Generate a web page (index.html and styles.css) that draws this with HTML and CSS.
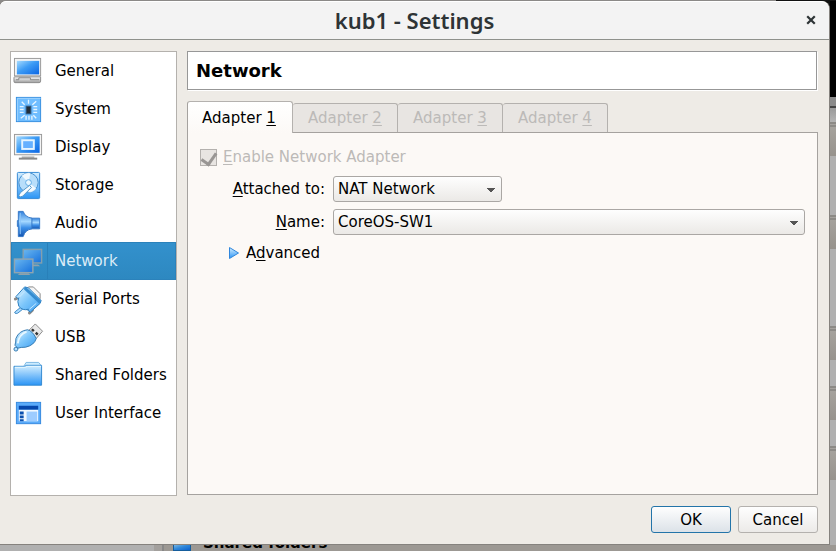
FILE: index.html
```html
<!DOCTYPE html>
<html lang="en">
<head>
<meta charset="utf-8">
<title>kub1 - Settings</title>
<link rel="stylesheet" href="styles.css">
</head>
<body>
<svg class="defs" width="0" height="0" aria-hidden="true">
  <defs>
    <linearGradient id="screen" x1="0" y1="0" x2="1" y2="1"><stop offset="0" stop-color="#a5dbff"/><stop offset=".45" stop-color="#3d9cf5"/><stop offset="1" stop-color="#0b66e4"/></linearGradient>
    <linearGradient id="dim" x1="0" y1="0" x2="1" y2="1"><stop offset="0" stop-color="#6bb8f0"/><stop offset="1" stop-color="#1670dc"/></linearGradient>
    <linearGradient id="sky" x1="0" y1="0" x2="0" y2="1"><stop offset="0" stop-color="#d5efff"/><stop offset="1" stop-color="#2a94f5"/></linearGradient>
    <linearGradient id="plug" x1="0" y1="0" x2="1" y2="1"><stop offset="0" stop-color="#e0f4ff"/><stop offset=".5" stop-color="#7cc6fb"/><stop offset="1" stop-color="#3c9df0"/></linearGradient>
    <linearGradient id="metal" x1="0" y1="0" x2="0" y2="1"><stop offset="0" stop-color="#ffffff"/><stop offset="1" stop-color="#9a9a9a"/></linearGradient>
    <linearGradient id="cone" x1="0" y1="0" x2="0" y2="1"><stop offset="0" stop-color="#2f7fdc"/><stop offset=".4" stop-color="#a5d8ff"/><stop offset=".65" stop-color="#3c8fe8"/><stop offset="1" stop-color="#1555b0"/></linearGradient>
  </defs>
</svg>
<div class="desktop">
  <main class="window">
    <header class="titlebar">
      <h1>kub1 - Settings</h1>
      <button class="close" type="button" aria-label="Close"><svg width="10" height="10" viewBox="0 0 10 10"><path d="M2 2l6 6M8 2L2 8" stroke="#2e3436" stroke-width="2.2" stroke-linecap="square"/></svg></button>
    </header>
    <div class="content">
      <nav class="sidebar">
        <a href="#general"><svg viewBox="0 0 32 32"><rect x="1.500" y="2.500" width="27" height="18" fill="#f4f4f4" stroke="#999"/><rect x="4" y="5" width="23" height="14" fill="url(#screen)"/><path d="M1.500 21.500h27v4.500q0 1.500-1.500 1.500H2q-1 0-1-1.500v-3.500z" fill="url(#metal)" stroke="#8a8a8a"/><path d="M3 24.500h3v-2h12v2h9" fill="none" stroke="#888"/></svg>General</a>
        <a href="#system"><svg viewBox="0 0 32 32"><rect x="3.500" y="3.500" width="25" height="25" fill="#6fbdff" stroke="#368fe0"/><path d="M4.500 28V4.500h24" fill="none" stroke="#9ed5ff"/><rect x="13.500" y="12.500" width="5" height="8" fill="#222d38" stroke="#335f8a"/><path d="M7 13h4M7 16h4M7 19h4M21 13h4M21 16h4M21 19h4M13.500 22.500v4M16.500 22.500v4M19.500 22.500v4M16 6v4M9 8l3 3M24 7.500l-4 3.500M12 22l-4 3M21 22l3 3" stroke="#e6f5ff" stroke-width="1.400"/></svg>System</a>
        <a href="#display"><svg viewBox="0 0 32 32"><path d="M9 24h13v3H9z" fill="url(#metal)"/><path d="M6 27.500h19" stroke="#888" stroke-width="2"/><rect x="1.500" y="2.500" width="28" height="21" fill="#f4f4f4" stroke="#999"/><rect x="3.500" y="4.500" width="24" height="17" fill="url(#screen)"/><rect x="9.500" y="8.500" width="12" height="9" fill="#65b0ff" stroke="#e5f4ff" stroke-width="2"/></svg>Display</a>
        <a href="#storage"><svg viewBox="0 0 32 32"><rect x="4.500" y="2.500" width="23" height="27" rx="1" fill="url(#sky)" stroke="#3589d5"/><circle cx="16" cy="13" r="10" fill="#b8defa" stroke="#458fce"/><path d="M16 13L9 6a10 10 0 0 1 9-3zM16 13l8 6a10 10 0 0 1-8 4z" fill="#fff" opacity=".8"/><circle cx="16" cy="13" r="3" fill="#e9f7ff" stroke="#5faae4"/><path d="M17 16l2 2-9 9-3 1-1-2 2-3z" fill="#f8fcff" stroke="#5095c9"/></svg>Storage</a>
        <a href="#audio"><svg viewBox="0 0 32 32"><path d="M6 13H4.500v6H6M18 10.500h9.500v11H18z" fill="url(#cone)" stroke="#397dca"/><path d="M5.500 3.500h5q2 6 9 7v11q-7 1-9 8h-5z" fill="url(#cone)" stroke="#3477c6"/><path d="M7.500 5v22" fill="none" stroke="#8dc6fa"/></svg>Audio</a>
        <a class="selected" href="#network" aria-current="page"><svg viewBox="0 0 32 32"><path d="M20 19h6l2 2h-8z" fill="#8ea1ad"/><rect x="10.500" y="3.500" width="19" height="14" fill="url(#dim)" stroke="#839fae" stroke-width="1.500"/><path d="M7 28h9l2 2H5z" fill="#8ea1ad"/><rect x="1.500" y="13.500" width="19" height="14" fill="url(#dim)" stroke="#8fa5b1" stroke-width="1.500"/></svg><span>Network</span></a>
        <a href="#serial"><svg viewBox="0 0 32 32"><path d="M14 5l2-2h5l7 7v5l-2 2z" fill="#f4f4f4" stroke="#8a8a8a"/><path d="M8 24l-5 4q-2 1-1 2t3 0l5-4" fill="#acdcff" stroke="#3c87c3"/><path d="M2.500 15.500l4-2M17 30l3-3" stroke="#8a8a8a" stroke-width="3" stroke-linecap="round"/><path d="M3 13l9-10 4 1 13 13-1 3-10 9-3-2 1-1q-6 2-10-3-2-5 0-9l-1 1z" fill="url(#plug)" stroke="#2b7dbd"/><path d="M12 4l16 15" stroke="#358cd0" stroke-width="3"/><path d="M6 14l6-6M17 26l7-6" stroke="#c6e9ff"/></svg>Serial Ports</a>
        <a href="#usb"><svg viewBox="0 0 32 32"><path d="M16 9l7-7 7.500 7.500L24 17z" fill="#e8e8e8" stroke="#898989"/><path d="M19.500 7.500l2 2M23.500 11l2 2" stroke="#333" stroke-width="2.500"/><path d="M15 8q5 1 9 9-2 7-11 9-5 0-8 1l-3-3q1-3 1-7 3-8 12-9z" fill="url(#plug)" stroke="#3479af"/><circle cx="3" cy="28" r="2" fill="#b9e3ff" stroke="#3479af"/><path d="M5 22q1-9 9-12" fill="none" stroke="#e6f7ff" stroke-width="2"/></svg>USB</a>
        <a href="#folders"><svg viewBox="0 0 32 32"><path d="M11.500 8V6l2-3.500h13l2 2.500v4z" fill="#ccecff" stroke="#7db9e3"/><path d="M1 6.500h11l2-1h15.500v20.500H1z" fill="url(#sky)" stroke="#3389d1"/><path d="M2 7.500h11l2-1h14" fill="none" stroke="#e8f9ff"/></svg>Shared Folders</a>
        <a href="#interface"><svg viewBox="0 0 32 32"><rect x="3.500" y="4.500" width="25" height="22" fill="#5aabfa" stroke="#3589df"/><path d="M6 12h20v12H6z" fill="#f3f9ff"/><path d="M6 8h20v4H6z" fill="#0648ac"/><path d="M14 14h11v10H14z" fill="#9dccff"/><path d="M7 14h4v3H7zM7 18h4v3H7zM7 22h4v2H7z" fill="#0b50af"/></svg>User Interface</a>
      </nav>
      <section class="page">
        <h2>Network</h2>
        <div class="tabs" role="tablist">
          <button class="active" type="button" role="tab" aria-selected="true">Adapter <u>1</u></button>
          <button type="button" role="tab" disabled>Adapter <u>2</u></button>
          <button type="button" role="tab" disabled>Adapter <u>3</u></button>
          <button type="button" role="tab" disabled>Adapter <u>4</u></button>
        </div>
        <form class="panel" role="tabpanel">
          <div class="enable"><input type="checkbox" id="enable" checked disabled><label for="enable"><u>E</u>nable Network Adapter</label></div>
          <div class="fields">
            <label for="attached"><u>A</u>ttached to:</label>
            <select id="attached" class="short"><option>NAT Network</option></select>
            <label for="name"><u>N</u>ame:</label>
            <select id="name"><option>CoreOS-SW1</option></select>
          </div>
          <button class="advanced" type="button"><svg width="10" height="12" viewBox="0 0 10 12"><path d="M.5.5v11L9.500 6z" fill="url(#sky)" stroke="#2f86dc"/></svg><span>A<u>d</u>vanced</span></button>
        </form>
      </section>
    </div>
    <footer class="actions">
      <button class="default" type="button">OK</button>
      <button type="button">Cancel</button>
    </footer>
  </main>
  <div class="behind-right" aria-hidden="true">
    <div class="terminal"></div>
    <div class="toolbar"></div>
    <div class="heading"></div>
    <div class="heading after-system"></div>
    <div class="heading after-storage"></div>
    <div class="heading after-audio"></div>
    <div class="heading after-network"></div>
  </div>
  <div class="behind-bottom" aria-hidden="true"><svg width="18" height="6"><path d="M0 0h18v6H0z" fill="#155d9c"/><path d="M1 0h16v5H1z" fill="url(#screen)" opacity=".7"/></svg><strong>Shared folders</strong></div>
</div>
</body>
</html>
```
FILE: styles.css
```css
* { box-sizing: border-box; }

body {
  margin: 0;
  font: 15px/20px "DejaVu Sans", sans-serif;
  color: #000;
}

button, select { font: inherit; color: inherit; }
.defs { display: block; }

u {
  text-decoration: underline;
  text-underline-offset: 2px;
  text-decoration-thickness: 1px;
  text-decoration-skip-ink: none;
}

/* Desktop: the dialog, with slivers of the windows behind it */
.desktop {
  display: grid;
  grid-template-columns: 1fr 6px;
  grid-template-rows: 1fr 6px;
  height: 100vh;
  padding-top: 1px;
  background: linear-gradient(to left, #111 60px, #8b8987 60px);
}

.window {
  display: flex;
  flex-direction: column;
  min-width: 0;
  background: #eeebe6;
  border-right: 1px solid #85827e;
  border-bottom: 1px solid #85827e;
  border-radius: 6px 8px 0 0;
}

.titlebar {
  display: grid;
  grid-template-columns: 36px 1fr 36px;
  align-items: center;
  height: 39px;
  padding-bottom: 2px;
  background: #f3f3f3;
  border-top: 1px solid #fff;
  border-bottom: 1px solid #8f918c;
  border-radius: 6px 8px 0 0;
}

.titlebar h1 {
  grid-column: 2;
  margin: 0;
  text-align: center;
  font: 600 22px/30px "Noto Sans", sans-serif;
  color: #2e3436;
}

.close { padding: 0; border: 0; background: none; line-height: 0; }

.content {
  display: flex;
  flex: 1;
  gap: 10px;
  min-height: 0;
  padding: 11px 11px 0 10px;
}

/* Sidebar */
.sidebar { width: 167px; flex: none; background: #fff; border: 1px solid #b4b1ad; }

.sidebar a {
  display: flex;
  align-items: center;
  gap: 11px;
  height: 38px;
  padding-left: 2px;
  color: #000;
  text-decoration: none;
  white-space: nowrap;
}

.sidebar svg { width: 31px; height: 31px; flex: none; }

.sidebar .selected {
  color: #dcecf7;
  background:
    linear-gradient(90deg, transparent 36px, #2980b9 36px, #2980b9 37px, transparent 37px),
    linear-gradient(#3391cd, #2d88c0);
  box-shadow: inset 0 0 0 1px #2b82bb;
}

/* Settings page */
.page { display: flex; flex: 1; flex-direction: column; min-width: 0; padding-bottom: 1px; }

.page h2 {
  height: 39px;
  margin: 0 1px 11px 0;
  padding: 9px 8px;
  font-size: 18px;
  line-height: 20px;
  background: #fff;
  border: 1px solid #979797;
  box-shadow: 1px 1px #fff;
}

.tabs { display: flex; align-items: flex-end; height: 32px; margin-bottom: -1px; }

.tabs button {
  width: 105px;
  height: 30px;
  padding: 0;
  color: #bcbab8;
  background: #e8e5e2;
  border: 1px solid #b4b1ae;
  border-bottom-color: #a5a29f;
  border-left: 0;
  border-radius: 3px 3px 0 0;
}

.tabs .active {
  position: relative;
  width: 106px;
  height: 32px;
  padding-right: 2px;
  color: #000;
  background: linear-gradient(#fff, #fcf9f6);
  border-left: 1px solid #a5a29f;
  border-bottom: 0;
}

.panel { flex: 1; padding: 14px 12px; background: #fcf9f6; border: 1px solid #a5a29f; }

.enable {
  display: flex;
  align-items: center;
  gap: 6px;
  height: 20px;
  margin-bottom: 9px;
  color: #bcbab8;
}

.enable input {
  appearance: none;
  width: 17px;
  height: 17px;
  margin: 0;
  border: 1px solid #b4b1ae;
  background: #e8e5e2;
}

.enable input:checked::before {
  content: "";
  display: block;
  width: 7px;
  height: 12px;
  margin: 0 auto;
  border: solid #999694;
  border-width: 0 3px 3px 0;
  transform: rotate(35deg);
}

.fields { display: grid; grid-template-columns: 125px 1fr; gap: 7px 8px; align-items: center; }
.fields label { text-align: right; }

select {
  appearance: none;
  width: 100%;
  height: 26px;
  padding: 0 4px;
  border: 1px solid #aaa7a4;
  border-radius: 3px;
  background:
    conic-gradient(from 315deg at 50% 100%, #555 90deg, transparent 0) no-repeat right 6px top 11px / 8px 4px,
    linear-gradient(#fefefe, #ebe9e6);
}

.short { width: 169px; }

.advanced {
  display: flex;
  align-items: center;
  gap: 7px;
  height: 20px;
  margin: 8px 0 0 29px;
  padding: 0;
  border: 0;
  background: none;
}

/* Dialog buttons */
.actions { display: flex; justify-content: flex-end; gap: 7px; padding: 10px 11px 11px; }

.actions button {
  width: 80px;
  height: 27px;
  padding: 0;
  border: 1px solid #b4b1ae;
  border-radius: 3px;
  background: linear-gradient(#fefefe, #eceae8);
}

.actions .default { border-color: #2374a9; background: linear-gradient(#fefefe, #dce2e8); }

/* Windows behind the dialog */
.behind-right { display: flex; flex-direction: column; min-height: 0; overflow: hidden; background: #b0b0b0; }
.behind-right div { flex: none; }
.terminal { height: 96px; background: #000; }
.toolbar { height: 25px; background: linear-gradient(#8a8a8a 9px, #444 9px, #444 11px, #999 11px, #b4b4b4); }
.heading {
  height: 34px;
  background: linear-gradient(#8c8a86 2px, #a5a29e 2px, #a5a29e 3px, #8c8a86 3px, #8c8a86 5px, #a5a29d 5px, #97938d);
}
.after-system { margin-top: 59px; }
.after-storage { margin-top: 77px; }
.after-audio { margin-top: 26px; }
.after-network { margin-top: 26px; }

.behind-bottom {
  grid-column: 1 / 3;
  display: flex;
  gap: 12px;
  overflow: hidden;
  padding-left: 173px;
  background: linear-gradient(90deg, #b0b0b0 154px, #a3a09d 154px, #a3a09d 162px, #888 162px, #888 164px, #9c9893 164px);
}

.behind-bottom strong { margin-top: -12px; line-height: 20px; }
```
